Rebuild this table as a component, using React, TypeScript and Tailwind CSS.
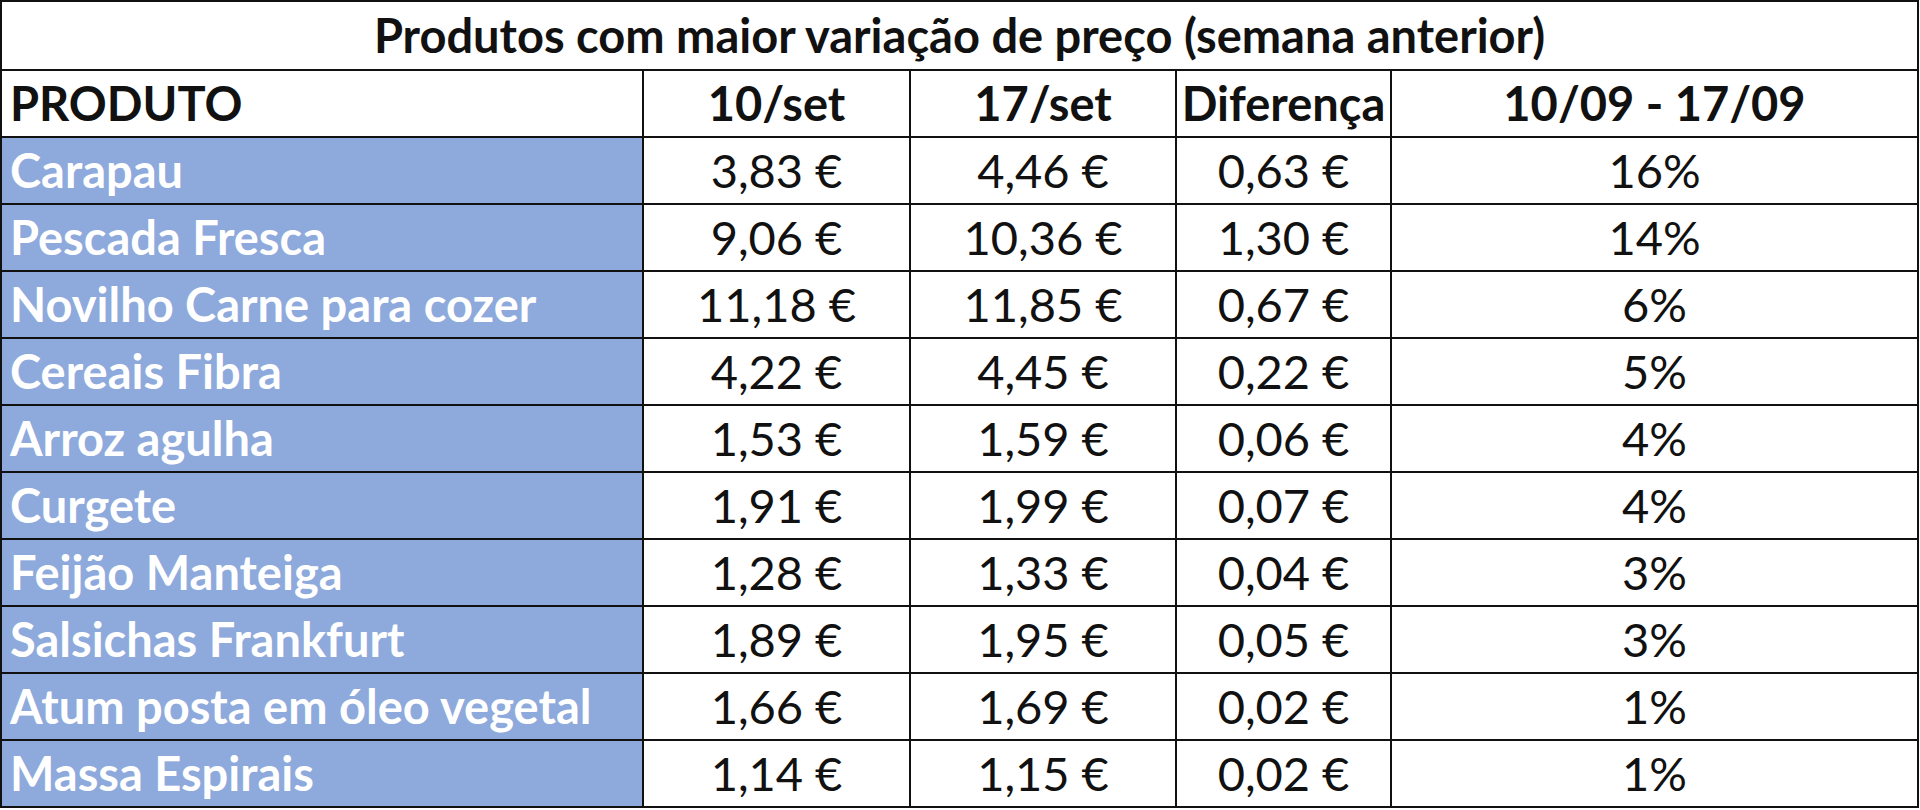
import React from 'react';

const rows = [
  { name: 'Carapau', a: '3,83 €', b: '4,46 €', diff: '0,63 €', pct: '16%' },
  { name: 'Pescada Fresca', a: '9,06 €', b: '10,36 €', diff: '1,30 €', pct: '14%' },
  { name: 'Novilho Carne para cozer', a: '11,18 €', b: '11,85 €', diff: '0,67 €', pct: '6%' },
  { name: 'Cereais Fibra', a: '4,22 €', b: '4,45 €', diff: '0,22 €', pct: '5%' },
  { name: 'Arroz agulha', a: '1,53 €', b: '1,59 €', diff: '0,06 €', pct: '4%' },
  { name: 'Curgete', a: '1,91 €', b: '1,99 €', diff: '0,07 €', pct: '4%' },
  { name: 'Feijão Manteiga', a: '1,28 €', b: '1,33 €', diff: '0,04 €', pct: '3%' },
  { name: 'Salsichas Frankfurt', a: '1,89 €', b: '1,95 €', diff: '0,05 €', pct: '3%' },
  { name: 'Atum posta em óleo vegetal', a: '1,66 €', b: '1,69 €', diff: '0,02 €', pct: '1%' },
  { name: 'Massa Espirais', a: '1,14 €', b: '1,15 €', diff: '0,02 €', pct: '1%' },
];

const cell = 'border-2 border-[#111] h-[67px] p-0 text-center align-middle whitespace-nowrap';

export default function App() {
  return (
    <div className="w-[1920px] h-[810px] bg-white text-[#111] font-['Lato',sans-serif] text-[47px] leading-none overflow-hidden">
      <table className="w-[1919px] table-fixed border-collapse">
        <colgroup>
          <col className="w-[642px]" />
          <col className="w-[267px]" />
          <col className="w-[266px]" />
          <col className="w-[215px]" />
          <col />
        </colgroup>
        <thead>
          <tr>
            <th colSpan={5} className="border-2 border-[#111] h-[69px] p-0 text-center align-middle font-bold">
              Produtos com maior variação de preço (semana anterior)
            </th>
          </tr>
          <tr>
            <th className={`${cell} !text-left pl-2 font-bold`}>PRODUTO</th>
            <th className={`${cell} font-bold`}>10/set</th>
            <th className={`${cell} font-bold`}>17/set</th>
            <th className={`${cell} font-bold`}>Diferença</th>
            <th className={`${cell} font-bold`}>10/09 - 17/09</th>
          </tr>
        </thead>
        <tbody>
          {rows.map((r) => (
            <tr key={r.name}>
              <td className={`${cell} !text-left pl-2 bg-[#8ea9db] text-white font-bold`}>{r.name}</td>
              <td className={cell}>{r.a}</td>
              <td className={cell}>{r.b}</td>
              <td className={cell}>{r.diff}</td>
              <td className={cell}>{r.pct}</td>
            </tr>
          ))}
        </tbody>
      </table>
    </div>
  );
}
